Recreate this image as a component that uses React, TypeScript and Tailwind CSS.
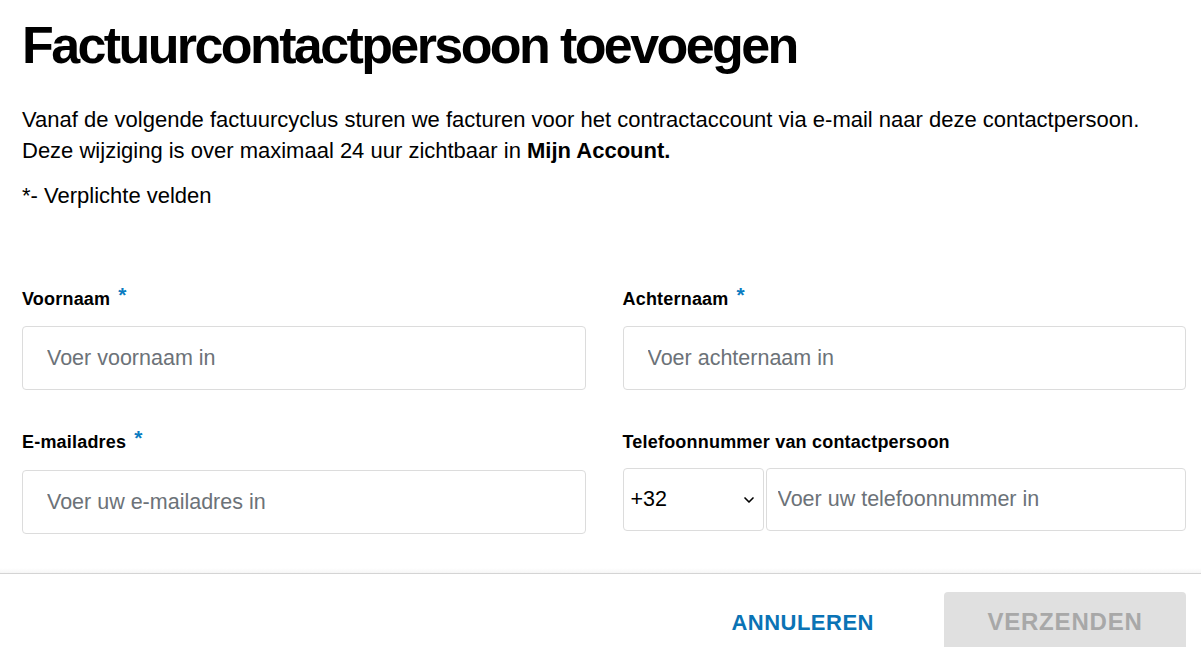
import { ChevronDown } from "lucide-react";

const font = { fontFamily: '"Liberation Sans", Arial, sans-serif' };

function Label(props: { text: string; required?: boolean }) {
  return (
    <div className="flex h-[24px] items-center text-[18px] font-bold leading-[24px] tracking-[0.2px] text-black">
      <span>{props.text}</span>
      {props.required && (
        <span className="ml-[8px] -translate-y-[4px] text-[21px] text-[#0a7cc1]">*</span>
      )}
    </div>
  );
}

function TextInput(props: { placeholder: string }) {
  return (
    <input
      className="h-[64px] w-full rounded-[4px] border border-[#dcdcdc] bg-white px-[24px] text-[21.5px] text-black outline-none placeholder:text-[#6c7278]"
      placeholder={props.placeholder}
    />
  );
}

export default function App() {
  return (
    <div className="min-h-[647px] overflow-hidden bg-white text-black" style={font}>
      <div className="pl-[22px] pr-[15px]">
        <h1 className="pt-[15px] text-[52px] font-bold leading-[60px] tracking-[-2.6px]">
          Factuurcontactpersoon toevoegen
        </h1>
        <p className="mt-[29px] text-[22px] leading-[31px]">
          Vanaf de volgende factuurcyclus sturen we facturen voor het contractaccount via e-mail naar
          deze contactpersoon.
          <br />
          Deze wijziging is over maximaal 24 uur zichtbaar in <b>Mijn Account.</b>
        </p>
        <p className="mt-[14px] text-[22px] leading-[31px]">*- Verplichte velden</p>

        <div className="mt-[76px] grid grid-cols-2 gap-x-[37px]">
          <div>
            <Label text="Voornaam" required />
            <div className="mt-[15px]">
              <TextInput placeholder="Voer voornaam in" />
            </div>
          </div>
          <div>
            <Label text="Achternaam" required />
            <div className="mt-[15px]">
              <TextInput placeholder="Voer achternaam in" />
            </div>
          </div>
          <div className="mt-[40px]">
            <Label text="E-mailadres" required />
            <div className="mt-[16px]">
              <TextInput placeholder="Voer uw e-mailadres in" />
            </div>
          </div>
          <div className="mt-[40px]">
            <Label text="Telefoonnummer van contactpersoon" />
            <div className="mt-[14px] flex gap-[2px]">
              <div className="flex h-[63px] w-[141px] shrink-0 items-center justify-between rounded-[4px] border border-[#dcdcdc] pl-[7px] pr-[6px] text-[21.5px]">
                <span>+32</span>
                <ChevronDown className="h-[16px] w-[16px]" strokeWidth={2.5} />
              </div>
              <input
                className="h-[63px] min-w-0 flex-1 rounded-[4px] border border-[#dcdcdc] px-[11px] text-[21.5px] outline-none placeholder:text-[#6c7278]"
                placeholder="Voer uw telefoonnummer in"
              />
            </div>
          </div>
        </div>
      </div>

      <div className="mt-[34px] h-[5px] bg-gradient-to-b from-white to-[#f6f6f6]" />
      <div className="border-t border-[#d4d4d4]" />

      <div className="flex items-center justify-end pr-[15px] pt-[18px]">
        <button className="mr-[70px] h-[60px] text-[22px] font-bold tracking-[0.5px] text-[#0a73b5]">
          ANNULEREN
        </button>
        <button className="h-[60px] w-[242px] rounded-[4px] bg-[#e0e0e0] text-[24px] font-bold tracking-[0.8px] text-[#a8a8a8]">
          VERZENDEN
        </button>
      </div>
    </div>
  );
}
